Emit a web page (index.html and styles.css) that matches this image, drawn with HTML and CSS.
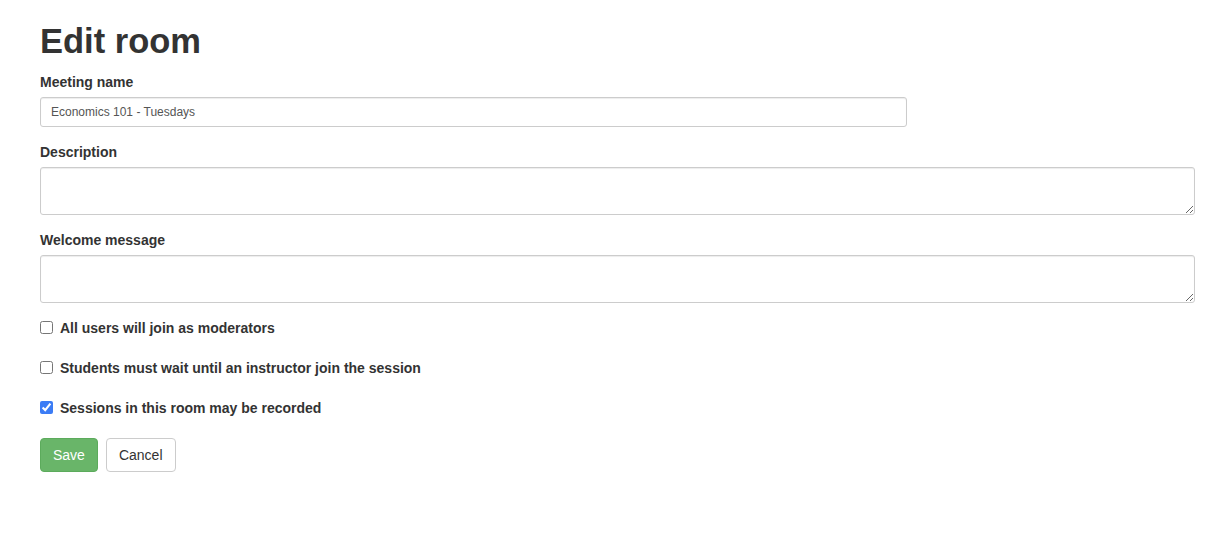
FILE: index.html
```html
<!DOCTYPE html>
<html lang="en">
<head>
  <meta charset="UTF-8">
  <meta name="viewport" content="width=device-width, initial-scale=1.0">
  <title>Edit room</title>
  <link rel="stylesheet" href="styles.css">
</head>
<body>
  <div class="container">
    <h1>Edit room</h1>
    <form class="room-form">
      <div class="form-group">
        <label for="name">Meeting name</label>
        <input type="text" id="name" class="form-control input-name" value="Economics 101 - Tuesdays">
      </div>
      <div class="form-group">
        <label for="description">Description</label>
        <textarea id="description" class="form-control" rows="2"></textarea>
      </div>
      <div class="form-group">
        <label for="welcome">Welcome message</label>
        <textarea id="welcome" class="form-control" rows="2"></textarea>
      </div>
      <div class="checkbox">
        <label><input type="checkbox"> All users will join as moderators</label>
      </div>
      <div class="checkbox">
        <label><input type="checkbox"> Students must wait until an instructor join the session</label>
      </div>
      <div class="checkbox">
        <label><input type="checkbox" checked> Sessions in this room may be recorded</label>
      </div>
      <div class="actions">
        <button type="submit" class="btn btn-success">Save</button>
        <button type="button" class="btn btn-default">Cancel</button>
      </div>
    </form>
  </div>
</body>
</html>
```

FILE: styles.css
```css
/* General Styles */
body {
  font-family: "Liberation Sans", Arial, sans-serif;
  font-size: 14px;
  line-height: 20px;
  color: #333;
  background: #fff;
  margin: 0;
}

.container {
  padding: 21px 30px 0 40px;
}

h1 {
  font-size: 34.5px;
  font-weight: bold;
  line-height: 40px;
  margin: 0 0 10.5px;
}

.form-group {
  margin-bottom: 15px;
}

label {
  display: block;
  font-weight: bold;
  margin-bottom: 5px;
}

.form-control {
  display: block;
  box-sizing: border-box;
  width: 100%;
  padding: 5px 10px;
  font-family: inherit;
  font-size: 12px;
  line-height: 1.5;
  color: #555;
  background: #fff;
  border: 1px solid #ccc;
  border-radius: 3px;
  box-shadow: inset 0 1px 1px rgba(0, 0, 0, 0.075);
  margin: 0;
}

.input-name {
  width: 867px;
  height: 30px;
}

textarea.form-control {
  height: 48px;
  resize: vertical;
}

/* Checkboxes */
.checkbox {
  margin-bottom: 20px;
}

.checkbox label {
  position: relative;
  padding-left: 20px;
  margin: 0;
  min-height: 20px;
}

.checkbox input {
  position: absolute;
  left: 0;
  top: 3px;
  width: 13px;
  height: 13px;
  margin: 0;
  accent-color: #3b7cf5;
}

/* Buttons */
.actions {
  display: flex;
  gap: 8px;
}

.btn {
  font-family: inherit;
  font-size: 14px;
  line-height: 20px;
  padding: 6px 12px;
  border: 1px solid transparent;
  border-radius: 4px;
  cursor: pointer;
}

.btn-success {
  color: #fff;
  background: #69b569;
  border-color: #5cab5c;
}

.btn-default {
  color: #333;
  background: #fff;
  border-color: #ccc;
}
```
